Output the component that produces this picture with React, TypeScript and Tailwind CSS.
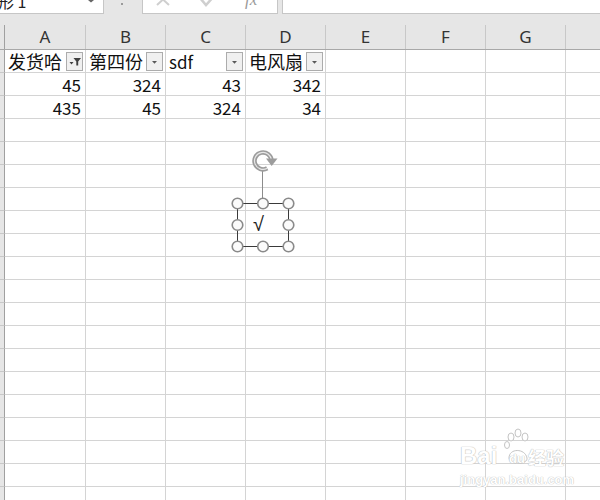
import React from "react";

const FONT = { fontFamily: '"Noto Sans CJK SC", "Noto Sans", sans-serif' };

function FilterActiveIcon() {
  return (
    <svg width="15" height="17" viewBox="0 0 15 17">
      <polygon points="2.5,9 6.5,9 4.5,11.5" fill="#404040" />
      <polygon points="6.5,5 14,5 11.2,8.5 11.2,12.5 9.3,12.5 9.3,8.5" fill="#404040" />
    </svg>
  );
}

function DropIcon() {
  return (
    <svg width="15" height="17" viewBox="0 0 15 17">
      <polygon points="5,8 10,8 7.5,10.8" fill="#5a5a5a" />
    </svg>
  );
}

function FilterBtn({ active }: { active?: boolean }) {
  return (
    <div className="w-[17px] h-[19px] border border-[#acacac] bg-[#f0f0f0] flex items-center justify-center shrink-0">
      {active ? <FilterActiveIcon /> : <DropIcon />}
    </div>
  );
}

const colLetters = ["A", "B", "C", "D", "E", "F", "G", "H"];
const colWidths = ["w-[81px]", "w-[80px]", "w-[80px]", "w-[80px]", "w-[80px]", "w-[80px]", "w-[80px]", "w-[80px]"];

const headerRow = ["发货哈", "第四份", "sdf", "电风扇"];
const dataRows = [
  ["45", "324", "43", "342"],
  ["435", "45", "324", "34"],
];

export default function App() {
  const totalRows = 20;
  return (
    <div className="w-[600px] h-[500px] overflow-hidden bg-white relative" style={FONT}>
      {/* top bar */}
      <div className="flex h-[15px] bg-[#e6e6e6]">
        <div className="w-[104px] h-[14px] shrink-0 bg-white border-r border-b border-[#c6c6c6] relative overflow-hidden">
          <span className="absolute left-[-2px] top-[-9px] text-[16px] leading-[20px] text-[#222] whitespace-nowrap">形 1</span>
          <svg className="absolute left-[86px] top-0" width="10" height="4" viewBox="0 0 10 4">
            <polygon points="2,0 8,0 5,2.5" fill="#666" />
          </svg>
        </div>
        <div className="w-[38px] shrink-0 relative">
          <div className="absolute left-[17px] top-[3px] w-[2px] h-[2px] bg-[#9a9a9a]" />
        </div>
        <div className="w-[136px] h-[14px] shrink-0 bg-white border-l border-r border-b border-[#c6c6c6] relative overflow-hidden">
          <svg className="absolute left-0 top-0" width="136" height="14" viewBox="0 0 136 14">
            <path d="M14 -6 L26 5 M26 -6 L14 5" stroke="#cfcfcf" strokeWidth="2" fill="none" />
            <path d="M57 -2 L63 5 L73 -6" stroke="#cfcfcf" strokeWidth="2.5" fill="none" />
          </svg>
          <span
            className="absolute left-[102px] top-[-10px] text-[17px] italic text-[#9a9a9a] leading-[20px]"
            style={{ fontFamily: '"Liberation Serif", serif' }}
          >
            fx
          </span>
        </div>
        <div className="w-[4px] shrink-0" />
        <div className="flex-1 h-[14px] bg-white border-l border-b border-[#c6c6c6]" />
      </div>
      {/* band */}
      <div className="h-[10px] bg-[#e6e6e6]" />
      {/* column header */}
      <div className="flex h-[25px] bg-[#e6e6e6] border-b border-[#a8a8a8]">
        <div className="w-[5px] shrink-0 border-r border-[#a0a0a0]" />
        {colLetters.map((c, i) => (
          <div
            key={c}
            className={`${colWidths[i]} shrink-0 border-r border-[#c8c8c8] flex items-center justify-center text-[17px] text-[#333]`}
            style={{ fontFamily: '"Noto Sans", sans-serif' }}
          >
            {c}
          </div>
        ))}
      </div>
      {/* grid rows */}
      {Array.from({ length: totalRows }).map((_, r) => (
        <div key={r} className="flex h-[23px]">
          <div className="w-[5px] shrink-0 bg-[#e6e6e6] border-r border-b border-r-[#a0a0a0] border-b-[#c8c8c8]" />
          {colLetters.map((c, i) => {
            let content: React.ReactNode = null;
            if (r === 0 && i < 4) {
              content = (
                <div className="flex items-center justify-between w-full pl-[3px] pr-[2px]">
                  <span className={headerRow[i] === "sdf" ? "text-[17px] text-[#111]" : "text-[18px] text-[#111]"}>
                    {headerRow[i]}
                  </span>
                  <FilterBtn active={i === 0} />
                </div>
              );
            } else if ((r === 1 || r === 2) && i < 4) {
              content = (
                <div className="w-full text-right pr-[4px] text-[17px] text-[#111]">{dataRows[r - 1][i]}</div>
              );
            }
            return (
              <div
                key={c}
                className={`${colWidths[i]} shrink-0 border-r border-b border-[#d4d4d4] flex items-center overflow-hidden whitespace-nowrap leading-none`}
              >
                {content}
              </div>
            );
          })}
        </div>
      ))}

      {/* shape overlay */}
      <svg className="absolute left-[230px] top-[145px]" width="70" height="110" viewBox="0 0 70 110">
        <rect x="7.5" y="58.5" width="51" height="43" fill="none" stroke="#3a3a3a" strokeWidth="1" />
        <line x1="32.5" y1="26" x2="32.5" y2="53" stroke="#8c8c8c" strokeWidth="1" />
        <path d="M37.2 23.3 A8.5 8.5 0 1 1 41.5 15.5" fill="none" stroke="#9c9c9c" strokeWidth="4.5" />
        <path d="M37.2 23.3 A8.5 8.5 0 1 1 41.5 15.5" fill="none" stroke="#e6e6e6" strokeWidth="1.2" />
        <polygon points="36,13.5 47.5,13.5 41.7,21" fill="#9c9c9c" />
        {[
          [7.5, 58.5],
          [33, 58.5],
          [58.5, 58.5],
          [7.5, 80],
          [58.5, 80],
          [7.5, 101.5],
          [33, 101.5],
          [58.5, 101.5],
        ].map(([x, y], k) => (
          <circle key={k} cx={x} cy={y} r="5.3" fill="#fbfbfb" stroke="#8a8a8a" strokeWidth="1.6" />
        ))}
      </svg>
      <div
        className="absolute left-[253px] top-[214px] text-[20px] leading-none text-[#222]"
        style={{ fontFamily: '"Liberation Sans", sans-serif' }}
      >
        √
      </div>

      {/* watermark */}
      <div
        className="absolute left-[460px] top-[444px] text-[24px] font-bold leading-none text-white [text-shadow:0_0_1px_#b8b8b8,0_0_1px_#b8b8b8]"
        style={{ fontFamily: '"Liberation Sans", sans-serif' }}
      >
        Bai
      </div>
      <svg className="absolute left-[503px] top-[428px]" width="28" height="40" viewBox="0 0 28 40">
        <g fill="white" stroke="#c4c4c4" strokeWidth="1">
          <ellipse cx="8" cy="9" rx="3" ry="4" />
          <ellipse cx="15" cy="5" rx="3" ry="4" />
          <ellipse cx="22" cy="9" rx="3" ry="4" />
          <ellipse cx="4" cy="17" rx="2.5" ry="3.5" />
          <path d="M6 30 C6 20 22 20 24 30 C25 37 6 37 6 30 Z" />
        </g>
      </svg>
      <div
        className="absolute left-[509px] top-[452px] text-[13px] font-bold leading-none text-white [text-shadow:0_0_1px_#b8b8b8,0_0_1px_#b8b8b8]"
        style={{ fontFamily: '"Liberation Sans", sans-serif' }}
      >
        du
      </div>
      <div className="absolute left-[528px] top-[448px] text-[18px] font-bold leading-none text-white [text-shadow:0_0_1px_#b8b8b8,0_0_1px_#b8b8b8]">
        经验
      </div>
      <div
        className="absolute left-[460px] top-[473px] text-[13px] font-bold leading-none text-white [text-shadow:0_0_1px_#c0c0c0,0_0_1px_#c0c0c0]"
        style={{ fontFamily: '"Liberation Sans", sans-serif' }}
      >
        jingyan.baidu.com
      </div>
    </div>
  );
}
